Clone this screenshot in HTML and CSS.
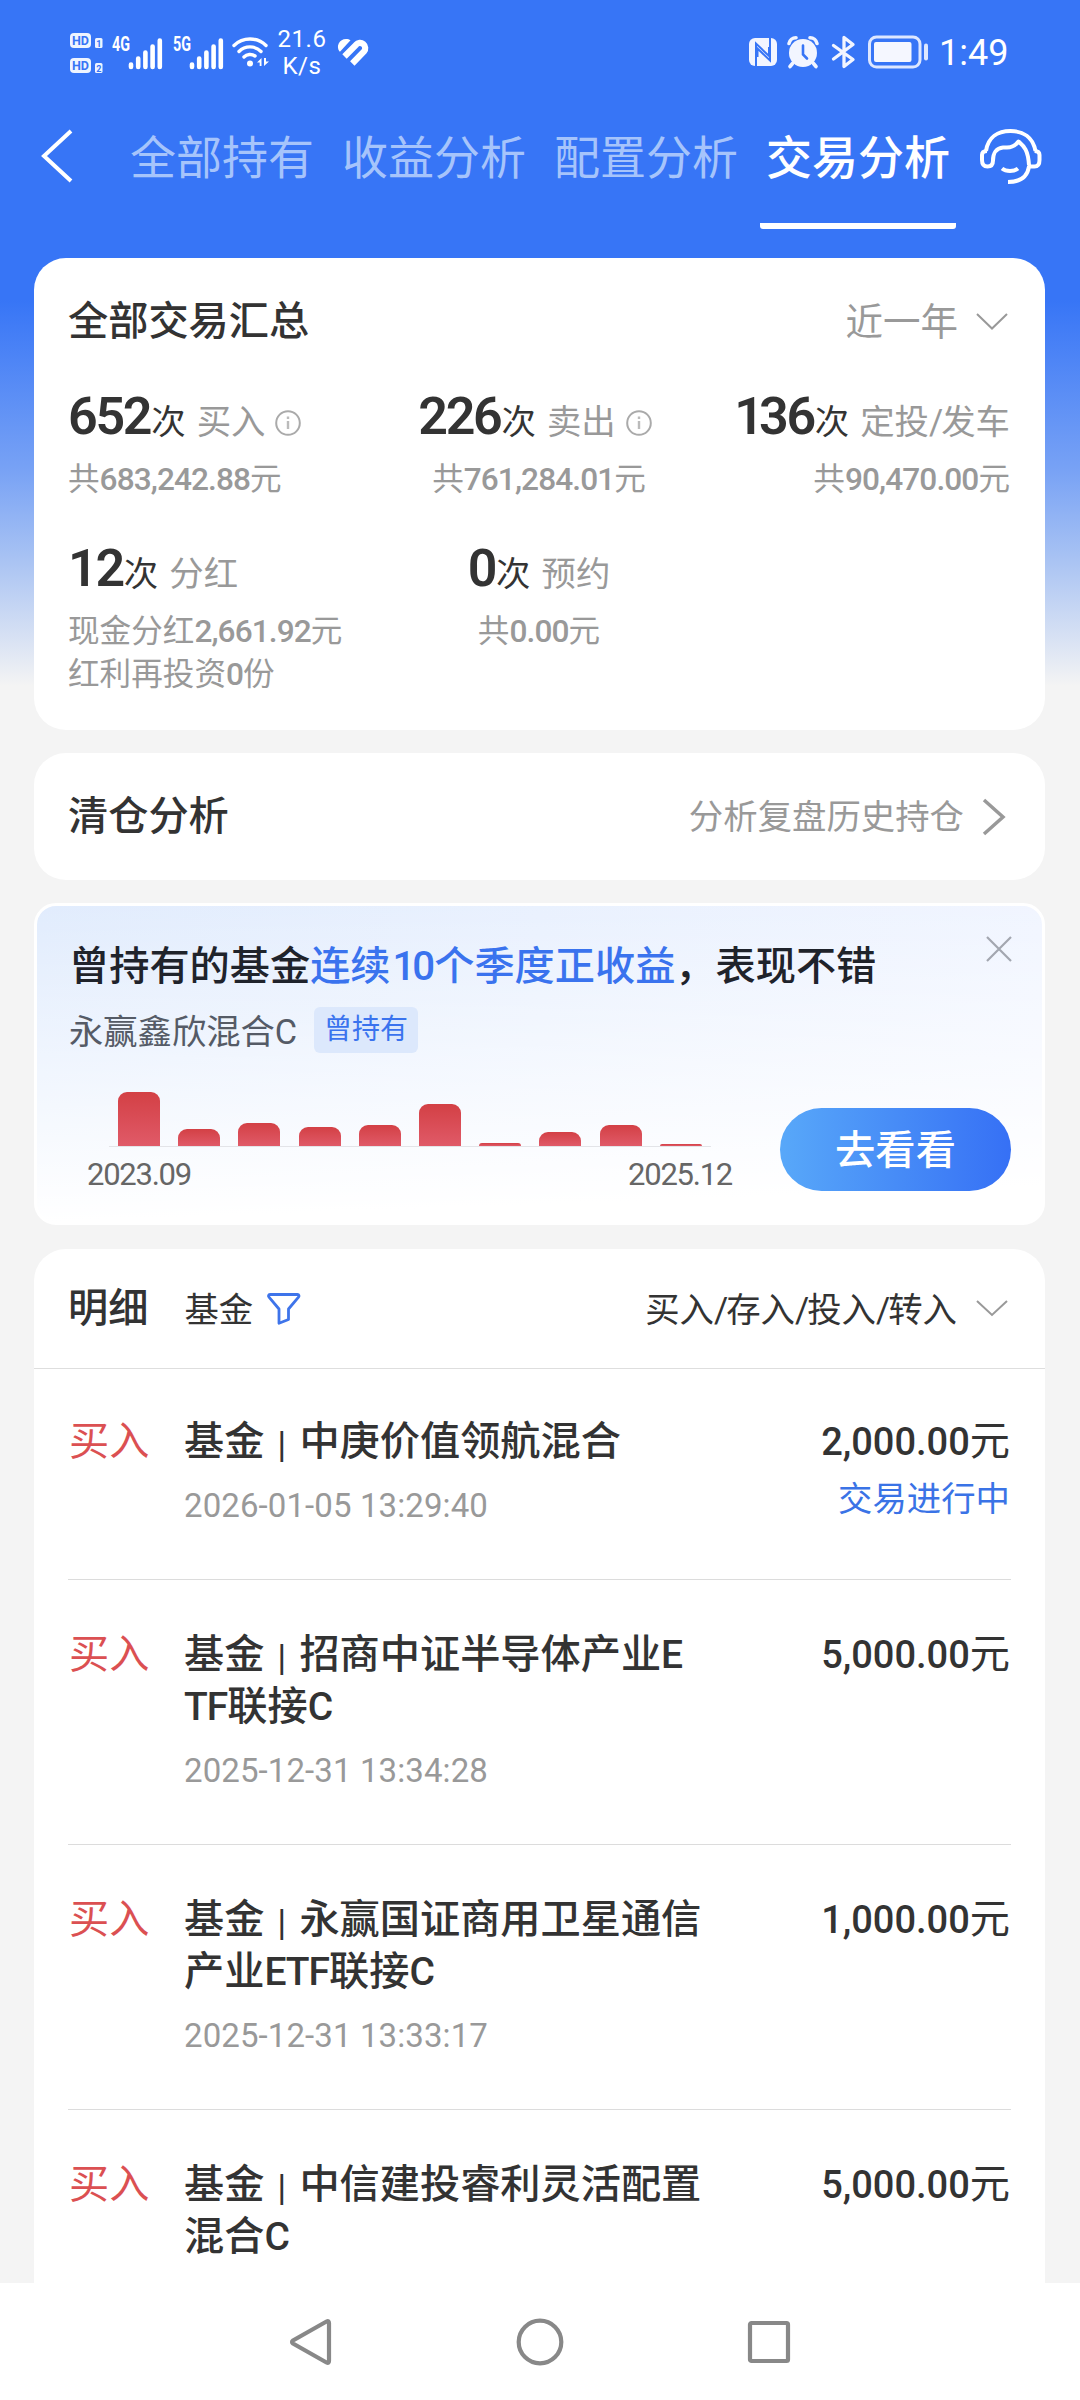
FILE: index.html
```html
<!DOCTYPE html>
<html lang="zh-CN">
<head>
<meta charset="utf-8">
<title>交易分析</title>
<link rel="stylesheet" href="styles.css">
</head>
<body>
<div class="screen">
  <header class="status">
    <svg class="st-hd" width="34" height="42" viewBox="0 0 34 42">
      <rect x="0" y="0" width="21" height="15" rx="4" fill="#eef4ff"/>
      <rect x="0" y="25" width="21" height="15" rx="4" fill="#eef4ff"/>
      <rect x="25" y="5" width="7.5" height="10" rx="1.5" fill="#eef4ff"/>
      <rect x="25" y="30" width="7.5" height="10" rx="1.5" fill="#eef4ff"/>
      <g class="hd-text"><text x="2" y="12.300" textLength="17" lengthAdjust="spacingAndGlyphs">HD</text><text x="2" y="37.300" textLength="17" lengthAdjust="spacingAndGlyphs">HD</text></g>
      <g class="hd-num"><text x="26.200" y="13.500">1</text><text x="26.200" y="38.500">2</text></g>
    </svg>
    <svg class="st-sig" width="52" height="44" viewBox="0 -5 52 44">
      <text class="sig-text" x="0" y="15" textLength="18" lengthAdjust="spacingAndGlyphs">4G</text>
      <path class="sig-bars" d="M19 28.500v2.500M26.200 22.500v8.500M33.400 16.500v14.500M40.600 10.500v20.500M47.800 4.500v26.500"/>
    </svg>
    <svg class="st-sig" width="52" height="44" viewBox="0 -5 52 44">
      <text class="sig-text" x="0" y="15" textLength="18" lengthAdjust="spacingAndGlyphs">5G</text>
      <path class="sig-bars" d="M19 28.500v2.500M26.200 22.500v8.500M33.400 16.500v14.500M40.600 10.500v20.500M47.800 4.500v26.500"/>
    </svg>
    <svg class="st-wifi" width="38" height="32" viewBox="0 0 38 32">
      <g fill="none" stroke="#fff" stroke-width="3.400" stroke-linecap="round"><path d="M2 9.500a23 23 0 0 1 32 0"/><path d="M7 15.500a15.500 15.500 0 0 1 22 0"/><path d="M12 21a8.500 8.500 0 0 1 11 -1"/></g>
      <circle cx="18" cy="27.500" r="3" fill="#fff"/>
      <path d="M29.500 22v8h-1.800v-3.500h-2.700zM32 22v8l5-4.500h-3v-3.500z" fill="#fff"/>
    </svg>
    <div class="speed"><span>21.6</span><span>K/s</span></div>
    <svg class="st-heart" width="32" height="28" viewBox="0 0 32 28">
      <path d="M2.500 13.500C-1.500 8 2.500 1 9 1c2 0 3.200.3 4.500 1.200L3.200 13.500z" fill="#fff"/>
      <path d="M7.500 18.500L19 6.800A5 5 0 0 1 27 13.500L15.300 25.500" fill="none" stroke="#fff" stroke-width="6.200"/>
    </svg>
    <span class="grow"></span>
    <svg class="st-nfc" width="30" height="30" viewBox="0 0 30 30">
      <rect x="1" y="1" width="28" height="28" rx="6" fill="#f2f5ff"/>
      <path d="M8 29V6.500l13 12.500V10M22 1v22.500L9.500 11.500V20" fill="none" stroke="#3775f6" stroke-width="2"/>
    </svg>
    <svg class="st-alarm" width="32" height="33" viewBox="0 0 32 33">
      <circle cx="16" cy="17" r="14" fill="#f2f5ff"/>
      <path d="M2 7.500A7 7 0 0 1 9 1.800M23 1.800A7 7 0 0 1 30 7.500M5.500 27.500L3 30.500M26.500 27.500L29 30.500" stroke="#f2f5ff" stroke-width="3.600" stroke-linecap="round" fill="none"/>
      <path d="M16 9.500v9l4 4" stroke="#3775f6" stroke-width="2.600" fill="none" stroke-linecap="round"/>
    </svg>
    <svg class="st-bt" width="26" height="34" viewBox="0 0 26 34">
      <path d="M2.500 10.500L22 24.500L13 31.500V2.500L22 9.500L2.500 24" fill="none" stroke="#f2f5ff" stroke-width="3.300" stroke-linejoin="round" stroke-linecap="round"/>
    </svg>
    <svg class="st-bat" width="62" height="34" viewBox="0 0 62 34">
      <rect x="1.500" y="2" width="50.500" height="30" rx="7" fill="none" stroke="#dde7ff" stroke-width="3"/>
      <rect x="6" y="7" width="37.500" height="20" rx="2" fill="#f5f7ff"/>
      <rect x="56" y="8.500" width="4" height="17" rx="2" fill="#dde7ff"/>
    </svg>
    <span class="clock">1:49</span>
  </header>

  <nav class="tabs">
    <svg class="back" width="34" height="54" viewBox="0 0 34 54"><path d="M31 2L4 27L31 52" fill="none" stroke="#fff" stroke-width="4"/></svg>
    <a class="tab">全部持有</a>
    <a class="tab">收益分析</a>
    <a class="tab">配置分析</a>
    <a class="tab tab-on">交易分析</a>
    <svg class="service" width="64" height="58" viewBox="0 0 64 58">
      <g fill="none" stroke="#fff" stroke-width="4" stroke-linejoin="round">
        <path d="M7 23C9 9 19 3 31.500 3S54 9 56.500 23"/>
        <path d="M8 23C4.500 23 3 24.500 3 27v5c0 4.500 2 6.500 5.500 6.500S14 36.500 14 32.500c0-7.500 3.500-12.500 10-13h4c5 0 8.500-2 11.500-6C44.500 18 49 21 50 37"/>
        <path d="M55.500 23c3.500 0 5 1.500 5 4v5c0 4.500-1.500 6.500-5 6.500H50C48.500 48 42 54 29 54"/>
        <path d="M23 40.500c4 3.200 12 3.200 16 0"/>
      </g>
    </svg>
  </nav>

  <main class="cards">
    <section class="card summary">
      <div class="card-head">
        <h2>全部交易汇总</h2>
        <div class="picker"><span>近一年</span><svg width="32" height="18" viewBox="0 0 32 18"><path d="M1 1L16 15.500L31 1" fill="none" stroke="#999" stroke-width="2"/></svg></div>
      </div>
      <div class="stats">
        <div class="stat"><p class="main"><b>652</b>次<i>买入</i><svg class="info" width="26" height="26" viewBox="0 0 26 26"><circle cx="13" cy="13" r="11.800" fill="none" stroke="#aaa" stroke-width="2"/><path d="M13 11v8M13 6.500v2.500" stroke="#bbb" stroke-width="2.400"/></svg></p><p class="sub">共<em>683,242.88</em>元</p></div>
        <div class="stat"><p class="main"><b>226</b>次<i>卖出</i><svg class="info" width="26" height="26" viewBox="0 0 26 26"><circle cx="13" cy="13" r="11.800" fill="none" stroke="#aaa" stroke-width="2"/><path d="M13 11v8M13 6.500v2.500" stroke="#bbb" stroke-width="2.400"/></svg></p><p class="sub">共<em>761,284.01</em>元</p></div>
        <div class="stat"><p class="main"><b><span class="one">1</span>36</b>次<i>定投<s>/</s>发车</i></p><p class="sub">共<em>90,470.00</em>元</p></div>
        <div class="stat"><p class="main"><b>12</b>次<i>分红</i></p><p class="sub">现金分红<em>2,661.92</em>元</p><p class="sub">红利再投资<em>0</em>份</p></div>
        <div class="stat"><p class="main"><b>0</b>次<i>预约</i></p><p class="sub">共<em>0.00</em>元</p></div>
      </div>
    </section>

    <section class="card clear">
      <h2>清仓分析</h2>
      <div class="more"><span>分析复盘历史持仓</span><svg width="26" height="36" viewBox="0 0 26 36"><path d="M2 1L21 18L2 35" fill="none" stroke="#999" stroke-width="3.500"/></svg></div>
    </section>

    <section class="card promo">
      <svg class="close" width="26" height="26" viewBox="0 0 26 26"><path d="M1 1L25 25M25 1L1 25" stroke="#a3a7b0" stroke-width="2.200"/></svg>
      <h3>曾持有的基金<span>连续<em>10</em>个季度正收益</span>，表现不错</h3>
      <div class="fund"><span class="fund-name">永赢鑫欣混合C</span><span class="badge">曾持有</span></div>
      <div class="promo-row">
        <div class="chart">
          <div class="bars">
            <span style="height:54px"></span><span style="height:17px"></span><span style="height:23px"></span><span style="height:19px"></span><span style="height:21px"></span><span style="height:42px"></span><span style="height:3px"></span><span style="height:14px"></span><span style="height:21px"></span><span style="height:2px"></span>
          </div>
          <div class="dates"><span>2023.09</span><span>2025.12</span></div>
        </div>
        <a class="go">去看看</a>
      </div>
    </section>

    <section class="card list">
      <div class="list-head">
        <h2>明细</h2>
        <span class="kind">基金</span>
        <svg class="funnel" width="34" height="34" viewBox="0 0 34 34"><path d="M3 2.500h27.500c1.500 0 2 1.500 1 2.700L21.500 17v10.500L12 31.300V17L2 5.200C1 4 1.500 2.500 3 2.500z" fill="none" stroke="#3e74ea" stroke-width="2.800" stroke-linejoin="round"/></svg>
        <span class="grow"></span>
        <span class="types">买入<s>/</s>存入<s>/</s>投入<s>/</s>转入</span>
        <svg width="32" height="18" viewBox="0 0 32 18"><path d="M1 1L16 15L31 1" fill="none" stroke="#999" stroke-width="2"/></svg>
      </div>
      <article class="row">
        <span class="side">买入</span>
        <div class="desc"><p class="name">基金<u>|</u>中庚价值领航混合</p><time>2026-01-05 13:29:40</time></div>
        <div class="amt"><p><em>2,000.00</em>元</p><p class="state">交易进行中</p></div>
      </article>
      <article class="row">
        <span class="side">买入</span>
        <div class="desc"><p class="name">基金<u>|</u>招商中证半导体产业<em>E</em><br><em>TF</em>联接<em>C</em></p><time>2025-12-31 13:34:28</time></div>
        <div class="amt"><p><em>5,000.00</em>元</p></div>
      </article>
      <article class="row">
        <span class="side">买入</span>
        <div class="desc"><p class="name">基金<u>|</u>永赢国证商用卫星通信<br>产业<em>ETF</em>联接<em>C</em></p><time>2025-12-31 13:33:17</time></div>
        <div class="amt"><p><em>1,000.00</em>元</p></div>
      </article>
      <article class="row">
        <span class="side">买入</span>
        <div class="desc"><p class="name">基金<u>|</u>中信建投睿利灵活配置<br>混合<em>C</em></p></div>
        <div class="amt"><p><em>5,000.00</em>元</p></div>
      </article>
    </section>
  </main>

  <footer class="sysnav">
    <svg width="46" height="50" viewBox="0 0 46 50"><path d="M38.500 4.500Q41 3.200 41 6V44Q41 46.800 38.500 45.500L5 26.500Q3 25 5 23.500z" fill="none" stroke="#888" stroke-width="4.200"/></svg>
    <svg width="50" height="50" viewBox="0 0 50 50"><circle cx="25" cy="25" r="21.300" fill="none" stroke="#888" stroke-width="4.200"/></svg>
    <svg width="46" height="46" viewBox="0 0 46 46"><rect x="4" y="4" width="38" height="38" rx="1.500" fill="none" stroke="#888" stroke-width="4.200"/></svg>
  </footer>
</div>
</body>
</html>
```
FILE: styles.css
```css
* { box-sizing: border-box; }
body, h2, h3, p { margin: 0; font-weight: 400; }
em, i { font-style: normal; }
u, s { text-decoration: none; }
s { letter-spacing: -2px; }
svg { display: block; flex: none; overflow: visible; }

body { font-family: Roboto, "Noto Sans CJK SC", sans-serif; color: #333; }
.screen {
  width: 1080px; height: 2400px; overflow: hidden;
  display: flex; flex-direction: column;
  background: linear-gradient(#3775f6 0, #3775f6 300px, #78a2f5 470px, #a9c3f3 560px, #f4f4f4 686px);
}
.grow { flex: 1; }

/* status bar */
.status { height: 104px; padding: 0 70px; display: flex; align-items: center; color: #fff; }
.st-hd { margin-top: 3px; }
.hd-text { font: 700 13.500px Roboto, sans-serif; fill: #3775f6; }
.hd-num { font: 700 9px Roboto, sans-serif; fill: #3775f6; }
.st-sig { margin-left: 8px; margin-top: 1px; }
.st-sig + .st-sig { margin-left: 9px; }
.sig-text { font: 700 20px Roboto, sans-serif; fill: #fff; }
.sig-bars { stroke: #fff; stroke-width: 4.600; stroke-linecap: round; }
.st-wifi { margin-left: 7px; }
.speed { width: 60px; margin-left: 2px; margin-top: 2px; display: flex; flex-direction: column; align-items: center; font-size: 24px; line-height: 27px; letter-spacing: .5px; }
.st-heart { margin-left: 5px; }
.st-alarm { margin-left: 9px; }
.st-bt { margin-left: 12px; }
.st-bat { margin-left: 11px; }
.clock { margin-left: 9px; margin-top: 2px; font-size: 36px; line-height: 40px; white-space: nowrap; width: 71px; }

/* top tabs */
.tabs { height: 154px; display: flex; align-items: flex-start; padding-left: 40px; color: #fff; }
.back { margin: 25px 56px 0 0; }
.tab { font-size: 46px; line-height: 60px; margin-right: 28px; padding-top: 24px; width: 184px; color: #a6c4fb; white-space: nowrap; }
.tab-on { color: #fff; font-weight: 500; width: 196px; margin: 0 23px 0 -6px; text-align: center; height: 125px; border-bottom: 6px solid #fff; border-radius: 3px; }
.service { margin-top: 24px; }

/* cards */
.cards { flex: 1; min-height: 0; overflow: hidden; padding: 0 35px 0 34px; display: flex; flex-direction: column; gap: 23px; }
.card { background: #fff; border-radius: 32px; flex: none; }
h2 { font-size: 40.200px; line-height: 60px; font-weight: 500; padding-top: 1px; }

.summary { height: 472px; padding: 33px 35px 0 34px; }
.card-head { display: flex; justify-content: space-between; align-items: center; }
.picker { display: flex; align-items: center; gap: 18px; font-size: 37.500px; color: #999; }
.picker span { padding-bottom: 6px; }
.picker svg { margin-right: 2px; }
.stats { display: grid; grid-template-columns: 1fr 1fr 1fr; margin-top: 34px; }
.stat { height: 152px; display: flex; flex-direction: column; align-items: flex-start; white-space: nowrap; }
.stat:nth-child(3n+2) { align-items: center; }
.stat:nth-child(3n) { align-items: flex-end; }
.main { display: flex; flex: none; align-items: baseline; font-size: 34.400px; line-height: 62px; height: 72px; }
.main b { font-size: 52px; font-weight: 600; letter-spacing: -2.300px; margin-right: 1px; }
.main .one { letter-spacing: -5px; }
.main i { color: #999; margin-left: 11px; }
.info { align-self: flex-start; margin: 24px 8px 0 10px; }
.sub { flex: none; font-size: 31.600px; line-height: 43px; color: #999; }
.sub em { font-weight: 500; letter-spacing: -.900px; }

.clear { height: 127px; padding: 0 37px 0 34px; display: flex; align-items: center; justify-content: space-between; }
.more { display: flex; align-items: center; gap: 18px; font-size: 34.400px; color: #999; }
.more span { padding-bottom: 5px; }

.promo { position: relative; height: 322px; border: 3px solid #fff; border-radius: 22px; padding: 31px 31px 0 32px;
  background: linear-gradient(178deg, rgba(255,255,255,0) 0, #fff 90%), linear-gradient(90deg, #e1ecfd, #eff4ff); }
.close { position: absolute; right: 30px; top: 30px; }
.promo h3 { font-size: 40.200px; line-height: 60px; font-weight: 500; color: #1f232b; white-space: nowrap; }
.promo h3 span { color: #3a73ee; }
.promo h3 em { letter-spacing: -3px; margin: 0 2px; }
.fund { display: flex; align-items: center; gap: 17px; height: 46px; margin-top: 10px; font-size: 34.300px; color: #555b66; }
.fund-name { padding-bottom: 3px; }
.badge { font-size: 28px; line-height: 45px; height: 46px; padding: 0 10px; border-radius: 6px; background: #dce8fc; color: #3a73ee; }
.promo-row { display: flex; justify-content: space-between; align-items: flex-start; margin-top: 39px; }
.chart { width: 666px; }
.bars { height: 55px; margin-left: 40px; width: 602px; display: flex; align-items: flex-end; gap: 18.200px; padding: 0 9px; border-bottom: 1px solid #e3e4e8; }
.bars span { width: 42px; flex: none; border-radius: 9px 9px 0 0; background: linear-gradient(#d34045, #e05a68); }
.dates { display: flex; justify-content: space-between; font-size: 31px; line-height: 36px; letter-spacing: -1.250px; color: #666; padding: 10px 3px 0 18px; }
.go { width: 231px; height: 83px; margin-top: 16px; border-radius: 42px; background: linear-gradient(90deg, #58a8f9, #3670f5); color: #fff; font-size: 40.300px; line-height: 85px; font-weight: 500; text-align: center; }

.list { border-radius: 32px 32px 0 0; height: 1040px; margin-top: 1px; }
.list-head { height: 120px; padding: 0 37px 0 34px; display: flex; align-items: center; border-bottom: 1px solid #dedede; font-size: 34.400px; }
.kind, .types { padding-bottom: 4px; }
.kind { margin-left: 36px; }
.funnel { margin-left: 14px; }
.types { margin-right: 19px; }
.row { margin: 0 34px; display: flex; align-items: flex-start; padding: 49px 1px 51px 0; border-bottom: 1px solid #dcdcdc; white-space: nowrap; font-size: 40.200px; line-height: 52px; }
.list-head + .row { padding-top: 47px; }
.side { color: #db5052; width: 116px; padding-left: 1px; }
.desc { flex: 1; }
.name { font-weight: 500; }
.name em { font-size: 39px; letter-spacing: -1px; }
.name u { font: 400 33px/40px "Liberation Sans", sans-serif; display: inline-block; width: 35px; text-align: center; }
time { display: block; margin-top: 16px; font-size: 33px; line-height: 44px; letter-spacing: .100px; color: #999; }
.amt { text-align: right; }
.amt em { font-weight: 500; font-size: 38px; }
.amt .state { font-size: 34.400px; margin-top: 5px; color: #3a73e6; }

.sysnav { height: 117px; flex: none; background: #fff; display: flex; align-items: center; justify-content: center; gap: 181px; }
```
